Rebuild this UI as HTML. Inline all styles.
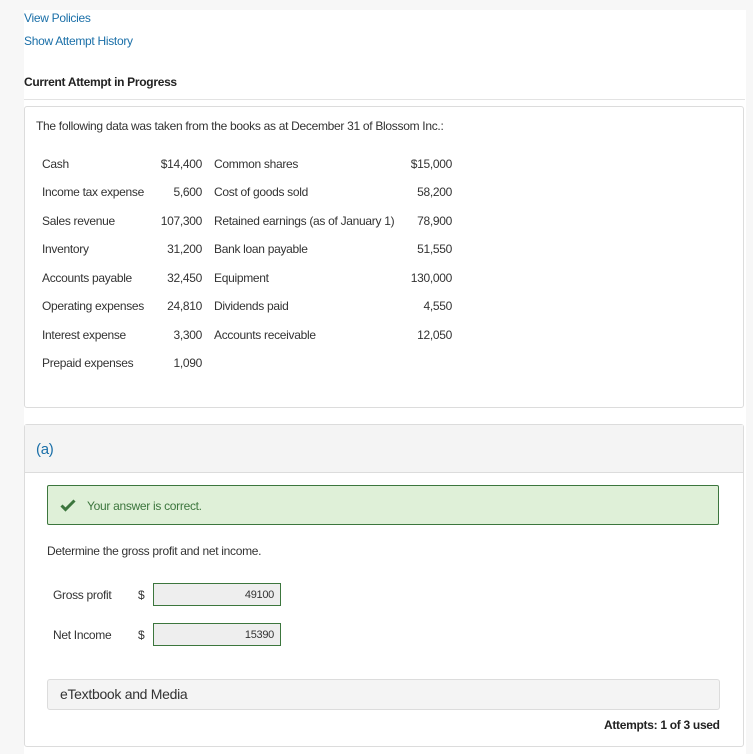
<!DOCTYPE html>
<html><head><style>
body{margin:0;width:753px;height:754px;background:#f7f7f7;font-family:"Liberation Sans",sans-serif;font-size:12px;color:#333;position:relative;overflow:hidden;letter-spacing:-0.3px}
.a{position:absolute;white-space:nowrap}
.r{text-align:right}
</style></head><body>
<div class="a" style="left:0;top:10px;width:746px;height:744px;background:#fff"></div>
<div class="a" style="left:0;top:0;width:24px;height:754px;background:#f7f7f7"></div>
<div class="a" style="left:24px;top:11px;color:#1a6fa8">View Policies</div>
<div class="a" style="left:24px;top:34px;color:#1a6fa8">Show Attempt History</div>
<div class="a" style="left:24px;top:75px;font-weight:bold;color:#222">Current Attempt in Progress</div>
<div class="a" style="left:24px;top:99px;width:721px;border-top:1px solid #e3e3e3"></div>
<div class="a" style="left:24px;top:106px;width:718px;height:300px;border:1px solid #dcdcdc;border-radius:3px"></div>
<div class="a" style="left:36px;top:119px">The following data was taken from the books as at December 31 of Blossom Inc.:</div>
<div class="a" style="left:42px;top:150px;line-height:28.45px">Cash<br>Income tax expense<br>Sales revenue<br>Inventory<br>Accounts payable<br>Operating expenses<br>Interest expense<br>Prepaid expenses</div>
<div class="a r" style="left:130px;width:72px;top:150px;line-height:28.45px">$14,400<br>5,600<br>107,300<br>31,200<br>32,450<br>24,810<br>3,300<br>1,090</div>
<div class="a" style="left:214px;top:150px;line-height:28.45px">Common shares<br>Cost of goods sold<br>Retained earnings (as of January 1)<br>Bank loan payable<br>Equipment<br>Dividends paid<br>Accounts receivable</div>
<div class="a r" style="left:380px;width:72px;top:150px;line-height:28.45px">$15,000<br>58,200<br>78,900<br>51,550<br>130,000<br>4,550<br>12,050</div>
<div class="a" style="left:24px;top:424px;width:718px;height:321px;border:1px solid #dcdcdc;border-radius:3px"></div>
<div class="a" style="left:25px;top:425px;width:718px;height:47px;background:#f4f4f4;border-bottom:1px solid #dcdcdc"></div>
<div class="a" style="left:36px;top:441px;font-size:15px;color:#1a6fa8">(a)</div>
<div class="a" style="left:47px;top:485px;width:670px;height:38px;background:#dff0d8;border:1px solid #3c763d;border-radius:2px"></div>
<svg class="a" style="left:60px;top:499px" width="16" height="13" viewBox="0 0 16 13"><path d="M1.5 6.5l4 4 9-9" stroke="#3c763d" stroke-width="3" fill="none"/></svg>
<div class="a" style="left:87px;top:499px;color:#3c763d">Your answer is correct.</div>
<div class="a" style="left:47px;top:544px">Determine the gross profit and net income.</div>
<div class="a" style="left:53px;top:588px">Gross profit</div>
<div class="a" style="left:138px;top:588px">$</div>
<div class="a r" style="left:153px;top:583px;width:120px;height:21px;line-height:23px;padding-right:6px;background:#eee;border:1px solid #3c763d;font-size:11px">49100</div>
<div class="a" style="left:53px;top:628px">Net Income</div>
<div class="a" style="left:138px;top:628px">$</div>
<div class="a r" style="left:153px;top:623px;width:120px;height:21px;line-height:23px;padding-right:6px;background:#eee;border:1px solid #3c763d;font-size:11px">15390</div>
<div class="a" style="left:47px;top:679px;width:671px;height:29px;background:#f4f4f4;border:1px solid #dcdcdc;border-radius:3px"></div>
<div class="a" style="left:60px;top:686px;font-size:14px">eTextbook and Media</div>
<div class="a" style="left:604px;top:718px;font-weight:bold;color:#222">Attempts: 1 of 3 used</div>
</body></html>
